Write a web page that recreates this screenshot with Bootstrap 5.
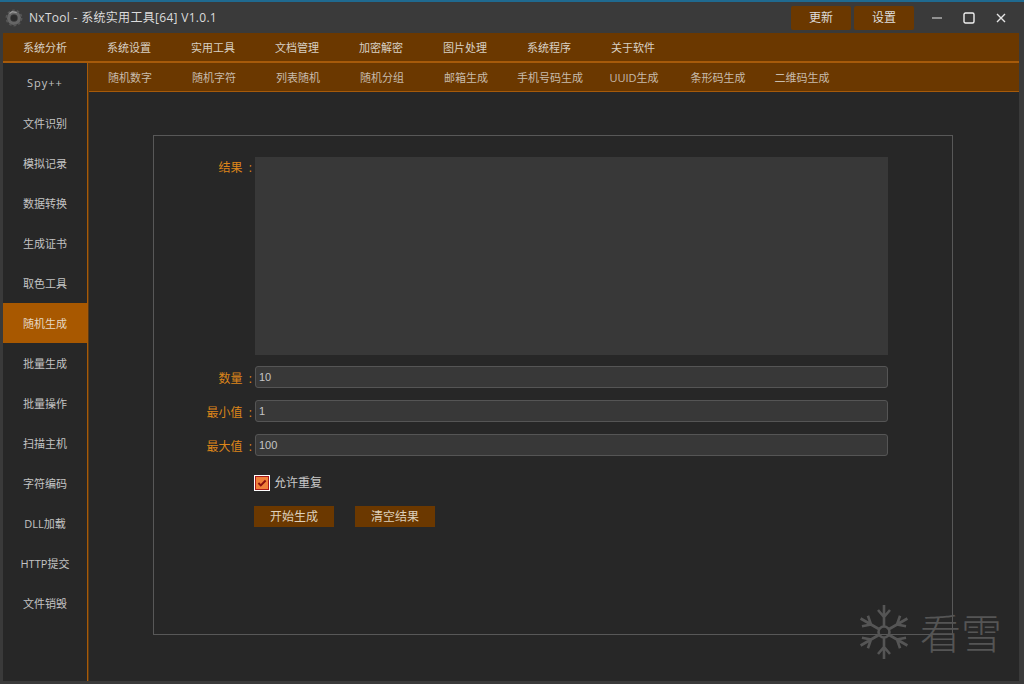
<!DOCTYPE html>
<html lang="zh-CN">
<head>
<meta charset="utf-8">
<title>NxTool</title>
<link rel="stylesheet" href="https://cdn.jsdelivr.net/npm/bootstrap@5.3.0/dist/css/bootstrap.min.css">
<style>
html,body{height:100%;overflow:hidden}
body{background:#3a3a3a;font-family:"Open Sans","Noto Sans CJK SC",sans-serif;font-size:11px;color:#c8c8c8}
.appwin{height:684px;width:1024px;border-top:2px solid #1f6a90;padding:0 5px 3px 3px;position:relative}
.titlebar{height:31px;flex:none;color:#dcdcdc}
.gearicon{margin-left:2px}
.apptitle{font-size:12px;margin-left:6px;letter-spacing:.3px}
.topbtn{width:60px;height:24px;background:#6b3800;color:#ddd;border:0;border-radius:2px;font-size:12px;padding:0;line-height:24px}
.topbtn:hover{background:#6b3800;color:#ddd}
.topgap{margin-right:3px}
.winbtns{margin-left:7px;margin-right:2px}
.winbtn{width:32px;height:24px;display:flex;align-items:center;justify-content:center}
.mainmenu{height:28px;flex:none;background:#6b3800}
.menuitem{width:84px;text-align:center;line-height:29px;color:#d8d0c4}
.menurule{height:2px;flex:none;background:#a65a0a}
.bodyrow{flex:1;min-height:0}
.sidemenu{width:85px;flex:none;background:#272727;border-right:1px solid #a85a08;box-shadow:1px 0 0 #5a3a14;position:relative;z-index:1}
.sideitem{height:40px;line-height:41px;text-align:center;color:#c4c4c4;letter-spacing:.05px}
.sideitem.latinitem{line-height:40px;letter-spacing:1px}
.sideon{background:#a85800;color:#e6d8c4}
.contentpane{background:#272727;min-width:0}
.subnav{height:29px;flex:none;background:#6b3800;border-bottom:1px solid #a65a0a}
.subitem{width:84px;text-align:center;line-height:29px;color:#c8bcac;white-space:nowrap}
.formpanel{width:800px;height:500px;margin:43px 0 0 65px;border:1px solid #585858;padding:21px 0 0 0}
.fieldlabel{width:101px;flex:none;text-align:right;color:#dc851a;font-size:12px;padding-right:3px;white-space:pre}
.fieldrow{margin-bottom:12px;height:22px}
.fieldrow .fieldlabel{margin-top:3px}
.fieldrow .form-control{width:633px;height:22px;min-height:22px;padding:0 3px;font-family:"Liberation Sans",sans-serif;font-size:11px;line-height:20px;background:#383838;color:#c4c4c4;border:1px solid #555;border-radius:3px;box-shadow:none}
.resultrow{height:198px;margin-bottom:11px}
.resultrow .form-control{width:633px;height:198px;background:#383838;border:0;border-radius:0;resize:none;box-shadow:none}
.resultrow .fieldlabel{padding-top:2px}
.checkrow{margin:19px 0 0 100px;height:16px;color:#c8c8c8;font-size:12px}
.tickbox{width:16px;height:16px;flex:none;display:block;margin-right:4px}
.actions{margin:15px 0 0 100px}
.actbtn{width:80px;height:21px;padding:0;line-height:21px;background:#6b3800;color:#ddd0bc;border:0;border-radius:0;font-size:12px;margin-right:21px}
.actbtn:hover{background:#6b3800;color:#ddd0bc}
.watermark{position:absolute;right:22px;bottom:24px;color:#555;font-family:"Noto Sans CJK SC",sans-serif;font-weight:300;font-size:41px;line-height:48px;gap:11px}
.watermark span{margin-top:-3px}
</style>
</head>
<body>
<div class="appwin d-flex flex-column">
  <div class="titlebar d-flex align-items-center">
    <svg class="gearicon" width="18" height="18" viewBox="0 0 20 20" aria-hidden="true">
      <circle cx="10" cy="10" r="6" fill="none" stroke="#666" stroke-width="3.6"/>
      <circle cx="10" cy="10" r="8.4" fill="none" stroke="#555" stroke-width="2" stroke-dasharray="3 2.3"/>
      <path d="M5 5l3-2 5 1" fill="none" stroke="#999" stroke-width="1.4"/>
      <circle cx="10" cy="10" r="3.4" fill="#2c2c2c"/>
    </svg>
    <span class="apptitle">NxTool - 系统实用工具[64] V1.0.1</span>
    <div class="ms-auto d-flex align-items-center">
      <button type="button" class="btn topbtn topgap">更新</button>
      <button type="button" class="btn topbtn">设置</button>
      <div class="winbtns d-flex">
        <span class="winbtn"><svg width="12" height="12" viewBox="0 0 12 12"><path d="M1 6h10" stroke="#b8b8b8" stroke-width="1.4"/></svg></span>
        <span class="winbtn"><svg width="12" height="12" viewBox="0 0 12 12"><rect x="1" y="1" width="10" height="10" rx="1.5" fill="none" stroke="#f0f0f0" stroke-width="1.4"/></svg></span>
        <span class="winbtn"><svg width="12" height="12" viewBox="0 0 12 12"><path d="M2 2l8 8M10 2l-8 8" stroke="#e6e6e6" stroke-width="1.4"/></svg></span>
      </div>
    </div>
  </div>
  <div class="mainmenu d-flex">
    <div class="menuitem">系统分析</div><div class="menuitem">系统设置</div><div class="menuitem">实用工具</div><div class="menuitem">文档管理</div><div class="menuitem">加密解密</div><div class="menuitem">图片处理</div><div class="menuitem">系统程序</div><div class="menuitem">关于软件</div>
  </div>
  <div class="menurule"></div>
  <div class="bodyrow d-flex">
    <div class="sidemenu">
      <div class="sideitem latinitem">Spy++</div><div class="sideitem">文件识别</div><div class="sideitem">模拟记录</div><div class="sideitem">数据转换</div><div class="sideitem">生成证书</div><div class="sideitem">取色工具</div><div class="sideitem sideon">随机生成</div><div class="sideitem">批量生成</div><div class="sideitem">批量操作</div><div class="sideitem">扫描主机</div><div class="sideitem">字符编码</div><div class="sideitem">DLL加载</div><div class="sideitem">HTTP提交</div><div class="sideitem">文件销毁</div>
    </div>
    <div class="contentpane flex-grow-1 d-flex flex-column">
      <div class="subnav d-flex">
        <div class="subitem">随机数字</div><div class="subitem">随机字符</div><div class="subitem">列表随机</div><div class="subitem">随机分组</div><div class="subitem">邮箱生成</div><div class="subitem">手机号码生成</div><div class="subitem">UUID生成</div><div class="subitem">条形码生成</div><div class="subitem">二维码生成</div>
      </div>
      <div class="formpanel">
        <div class="resultrow d-flex">
          <div class="fieldlabel">结果  :</div>
          <textarea class="form-control" aria-label="结果"></textarea>
        </div>
        <div class="fieldrow d-flex align-items-center">
          <div class="fieldlabel">数量  :</div>
          <input class="form-control" value="10" aria-label="数量">
        </div>
        <div class="fieldrow d-flex align-items-center">
          <div class="fieldlabel">最小值  :</div>
          <input class="form-control" value="1" aria-label="最小值">
        </div>
        <div class="fieldrow d-flex align-items-center">
          <div class="fieldlabel">最大值  :</div>
          <input class="form-control" value="100" aria-label="最大值">
        </div>
        <div class="checkrow d-flex align-items-center">
          <svg class="tickbox" viewBox="0 0 16 16" aria-hidden="true">
            <rect x=".5" y=".5" width="15" height="15" fill="#f0803a" stroke="#fff"/>
            <rect x="1.5" y="1.5" width="13" height="13" fill="none" stroke="#a81818"/>
            <path d="M4.4 8l2.4 2.5 4.8-5" fill="none" stroke="#8a1010" stroke-width="1.9"/>
          </svg>
          <span>允许重复</span>
        </div>
        <div class="actions d-flex">
          <button type="button" class="btn actbtn">开始生成</button>
          <button type="button" class="btn actbtn">清空结果</button>
        </div>
      </div>
    </div>
  </div>
  <div class="watermark d-flex align-items-center">
    <svg width="50" height="56" viewBox="-25 -28 50 56" aria-hidden="true">
      <g stroke="#555" stroke-width="2.6" fill="none">
        <path d="M0-27V-6M0 6V27M-6-22L0-15 6-22M-6 22L0 15 6 22"/>
        <path d="M0-27V-6M0 6V27M-6-22L0-15 6-22M-6 22L0 15 6 22" transform="rotate(60)"/>
        <path d="M0-27V-6M0 6V27M-6-22L0-15 6-22M-6 22L0 15 6 22" transform="rotate(120)"/>
        <circle r="5.5"/>
      </g>
    </svg>
    <span>看雪</span>
  </div>
</div>
</body>
</html>
